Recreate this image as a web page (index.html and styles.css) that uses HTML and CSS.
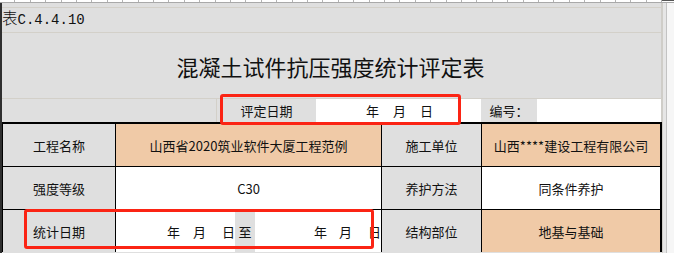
FILE: index.html
```html
<!DOCTYPE html>
<html lang="zh">
<head>
<meta charset="utf-8">
<title>混凝土试件抗压强度统计评定表</title>
<link rel="stylesheet" href="styles.css">
</head>
<body>
<div class="ruler"><div class="ruler-ticks"></div><div class="ruler-end"></div></div>
<div class="page">
  <div class="sheet">
    <div class="hrow r0"></div>
    <div class="hrow r1"><span class="code"><span class="code-cjk">表</span>C.4.4.10</span></div>
    <div class="hrow r2"><h1 class="title">混凝土试件抗压强度统计评定表</h1></div>
    <div class="hrow r3">
      <div class="hc blank"></div>
      <div class="hc lbl-date">评定日期</div>
      <div class="hc val-date"><span>年</span><span>月</span><span>日</span></div>
      <div class="hc lbl-no">编号：</div>
      <div class="hc val-no"></div>
    </div>
    <div class="grid">
      <div class="cell label">工程名称</div>
      <div class="cell peach">山西省2020筑业软件大厦工程范例</div>
      <div class="cell label">施工单位</div>
      <div class="cell peach">山西****建设工程有限公司</div>

      <div class="cell label">强度等级</div>
      <div class="cell white">C30</div>
      <div class="cell label">养护方法</div>
      <div class="cell white">同条件养护</div>

      <div class="cell label">统计日期</div>
      <div class="cell range">
        <div class="range-part first"><span class="y">年</span><span class="m">月</span><span>日</span></div>
        <div class="range-to">至</div>
        <div class="range-part second"><span class="y2">年</span><span class="m">月</span><span>日</span></div>
      </div>
      <div class="cell label">结构部位</div>
      <div class="cell peach">地基与基础</div>
    </div>
  </div>
  <div class="gutter"><div class="gutter-a"></div><div class="gutter-line"></div><div class="gutter-b"></div></div>
</div>
<div class="mark mark-top"></div>
<div class="mark mark-bottom"></div>
</body>
</html>
```
FILE: styles.css
```css
* { box-sizing: border-box; margin: 0; padding: 0; }

html, body {
  width: 674px;
  height: 253px;
  overflow: hidden;
}

body {
  position: relative;
  background: #dfdfdf;
  font-family: "Noto Sans CJK SC", "Noto Sans", sans-serif;
  font-size: 13px;
  color: #111;
}

.ruler {
  display: flex;
  height: 3px;
  border-bottom: 1px solid #a9a9a9;
}
.ruler-ticks {
  width: 662px;
  background: repeating-linear-gradient(to right, #fff 0 14.4px, #b3b3b3 14.4px 15.4px);
}
.ruler-end {
  flex: 1;
  background: #fff;
  border-top: 1px solid #555;
}

.page {
  display: flex;
  height: 250px;
  border-left: 2px solid #2f2f2f;
}

.sheet {
  width: 660px;
  display: flex;
  flex-direction: column;
}

.hrow {
  border-bottom: 1px solid #d3d0c9;
  border-right: 1px solid #cfcdc8;
}
.r0 { height: 5px; }
.r1 {
  height: 25px;
  display: flex;
  align-items: flex-end;
  padding-bottom: 3px;
}
.code {
  font-family: "Liberation Mono", "Noto Sans CJK SC", monospace;
  font-size: 14px;
  line-height: 17px;
  color: #111;
}
.code-cjk {
  font-family: "Noto Sans CJK SC", sans-serif;
  font-size: 15.5px;
  font-weight: 300;
}

.r2 {
  height: 66px;
  display: flex;
  align-items: center;
  justify-content: center;
}
.title {
  font-size: 22px;
  font-weight: 400;
  letter-spacing: 0;
  color: #111;
  padding-right: 2px;
}

.r3 {
  height: 23px;
  border-bottom: none;
  display: flex;
}
.hc {
  display: flex;
  align-items: center;
  justify-content: center;
}
.blank { width: 215px; border-right: 1px solid #d3d0c9; }
.lbl-date { width: 99px; }
.val-date { width: 165px; background: #fff; gap: 14px; padding-left: 2px; }
.lbl-no { width: 56px; }
.val-no { flex: 1; background: #fff; }

.grid {
  display: grid;
  grid-template-columns: 112px 265px 99px 178px;
  grid-template-rows: 42px 42px 42px;
  gap: 1px;
  background: #000;
  border-top: 2px solid #000;
  border-left: 1px solid #000;
  border-right: 2px solid #000;
}

.cell {
  display: flex;
  align-items: center;
  justify-content: center;
}
.label { background: #dfdfdf; }
.peach { background: #f0caa7; }
.white { background: #fff; }

.range { display: flex; align-items: stretch; justify-content: flex-start; background: #fff; }
.range-part {
  display: flex;
  align-items: center;
  justify-content: flex-end;
  background: #fff;
}
.first { width: 119px; }
.second { flex: 1; }
.range-to {
  width: 20px;
  background: #dfdfdf;
  display: flex;
  align-items: center;
  justify-content: center;
}
.y { margin-right: 13px; }
.y2 { margin-right: 12px; }
.m { margin-right: 16px; }

.gutter {
  flex: 1;
  display: flex;
}
.gutter-a { width: 4px; background: #e6e6e6; border-left: 1px solid #cfcdc8; }
.gutter-line { width: 1px; background: #c3c3c3; }
.gutter-b { flex: 1; background: #f6f6f6; }

.mark {
  position: absolute;
  border: 3px solid #fb2414;
  border-radius: 3px;
  pointer-events: none;
}
.mark-top { left: 220px; top: 94px; width: 241px; height: 31px; }
.mark-bottom { left: 24px; top: 209px; width: 350px; height: 40px; }
```
